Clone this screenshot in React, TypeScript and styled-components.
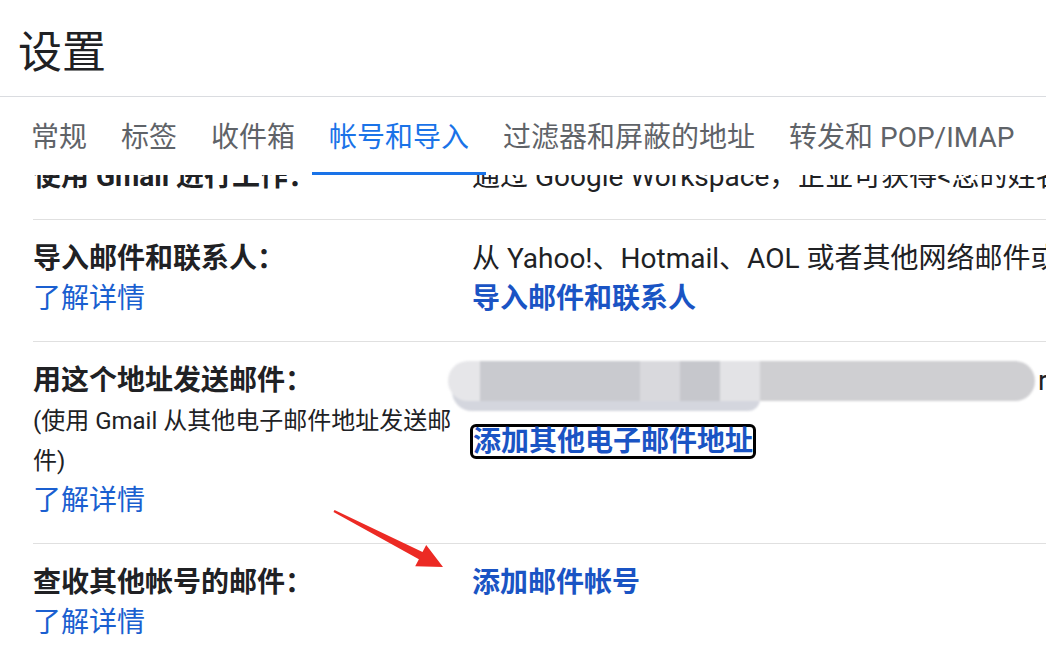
import React from "react";
import styled, { createGlobalStyle } from "styled-components";

const GlobalStyle = createGlobalStyle`
  html, body {
    margin: 0;
    padding: 0;
    background: #fff;
    overflow: hidden;
  }
  body {
    font-family: Roboto, "Noto Sans CJK SC", sans-serif;
    color: #202124;
  }
`;

const Page = styled.div`
  position: relative;
  width: 1046px;
  height: 658px;
  overflow: hidden;
  display: flex;
  flex-direction: column;
  background: #fff;
`;

const Header = styled.header`
  height: 97px;
  box-sizing: border-box;
  flex-shrink: 0;
  display: flex;
  align-items: center;
  padding: 2px 0 0 18px;
  border-bottom: 1px solid #dadce0;
`;

const Title = styled.h1`
  margin: 0;
  font-family: "Noto Sans CJK SC", sans-serif;
  font-size: 44px;
  font-weight: 400;
  line-height: 1;
  color: #202124;
`;

const TabBar = styled.nav`
  position: relative;
  z-index: 1;
  flex-shrink: 0;
  height: 78px;
  display: flex;
  padding-left: 14px;
  background: #fff;
`;

const Tab = styled.div<{ $active?: boolean }>`
  display: flex;
  align-items: center;
  box-sizing: border-box;
  padding: 0 17px;
  font-size: 28px;
  white-space: nowrap;
  color: ${(p) => (p.$active ? "#1a73e8" : "#5f6368")};
  border-bottom: 3px solid ${(p) => (p.$active ? "#1a73e8" : "transparent")};
`;

const Viewport = styled.div`
  flex: 1;
  overflow: hidden;
`;

const List = styled.div`
  margin-top: -37px;
`;

const Row = styled.section`
  margin-left: 33px;
  display: grid;
  grid-template-columns: 439px minmax(0, 1fr);
  padding: 19px 0 22px;
  border-bottom: 1px solid #e0e0e0;
`;

const LeftCol = styled.div`
  display: flex;
  flex-direction: column;
`;

const RightCol = styled.div`
  display: flex;
  flex-direction: column;
  align-items: flex-start;
  min-width: 0;
`;

const Label = styled.div`
  font-size: 28px;
  font-weight: 700;
  line-height: 40px;
  color: #202124;
`;

const Desc = styled.div`
  font-size: 24px;
  line-height: 40px;
  color: #202124;
`;

const LearnMore = styled.a`
  font-size: 28px;
  line-height: 40px;
  color: #1a5fd0;
  text-decoration: none;
`;

const Text = styled.div`
  font-size: 28px;
  line-height: 40px;
  white-space: nowrap;
  color: #202124;
`;

const Action = styled.a<{ $focused?: boolean }>`
  display: inline-block;
  font-size: 28px;
  font-weight: 700;
  white-space: nowrap;
  color: #1a54c4;
  text-decoration: none;
  line-height: ${(p) => (p.$focused ? "29px" : "40px")};
  ${(p) =>
    p.$focused &&
    `
    margin: 11px 0 0 -2px;
    border: 3px solid #000;
    border-radius: 6px;
    background: #fff;
  `}
`;

const MosaicLine = styled.div`
  display: flex;
  align-items: flex-start;
  margin-left: -24px;
  height: 52px;
  white-space: nowrap;
`;

const Mosaic = styled.div`
  position: relative;
  display: flex;
  height: 40px;
  filter: blur(1.2px);
`;

const Block = styled.div<{ $w: number; $c: string }>`
  position: relative;
  z-index: 1;
  width: ${(p) => p.$w}px;
  height: 100%;
  background: ${(p) => p.$c};
  &:first-child {
    border-radius: 20px 0 0 20px;
  }
  &:last-of-type {
    border-radius: 0 20px 20px 0;
  }
`;

const Smudge = styled.span`
  position: absolute;
  left: 4px;
  top: 30px;
  width: 308px;
  height: 20px;
  border-radius: 0 0 30px 50px;
  background: #d4d6de;
`;

const Tail = styled.span`
  margin-left: 3px;
  font-size: 28px;
  line-height: 40px;
  color: #202124;
`;

const Arrow = styled.svg`
  position: absolute;
  left: 320px;
  top: 495px;
  z-index: 2;
`;

const tabs = ["常规", "标签", "收件箱", "帐号和导入", "过滤器和屏蔽的地址", "转发和 POP/IMAP"];

const mosaic = [
  { w: 32, c: "#e6e6e9" },
  { w: 160, c: "#c9cacf" },
  { w: 40, c: "#d9d9dd" },
  { w: 40, c: "#c6c7cc" },
  { w: 40, c: "#e3e3e6" },
  { w: 275, c: "#cfcfd2" },
];

export default function App() {
  return (
    <>
      <GlobalStyle />
      <Page>
        <Header>
          <Title>设置</Title>
        </Header>
        <TabBar>
          {tabs.map((t) => (
            <Tab key={t} $active={t === "帐号和导入"}>
              {t}
            </Tab>
          ))}
        </TabBar>
        <Viewport>
          <List>
            <Row>
              <LeftCol>
                <Label>使用 Gmail 进行工作：</Label>
              </LeftCol>
              <RightCol>
                <Text>通过 Google Workspace，企业可获得&lt;您的姓名&gt;@&lt;您的公司&gt;.com</Text>
              </RightCol>
            </Row>
            <Row>
              <LeftCol>
                <Label>导入邮件和联系人：</Label>
                <LearnMore>了解详情</LearnMore>
              </LeftCol>
              <RightCol>
                <Text>从 Yahoo!、Hotmail、AOL 或者其他网络邮件或 POP3 帐号中导入。</Text>
                <Action>导入邮件和联系人</Action>
              </RightCol>
            </Row>
            <Row>
              <LeftCol>
                <Label>用这个地址发送邮件：</Label>
                <Desc>(使用 Gmail 从其他电子邮件地址发送邮件)</Desc>
                <LearnMore>了解详情</LearnMore>
              </LeftCol>
              <RightCol>
                <MosaicLine>
                  <Mosaic>
                    {mosaic.map((b, i) => (
                      <Block key={i} $w={b.w} $c={b.c} />
                    ))}
                    <Smudge />
                  </Mosaic>
                  <Tail>r</Tail>
                </MosaicLine>
                <Action $focused>添加其他电子邮件地址</Action>
              </RightCol>
            </Row>
            <Row>
              <LeftCol>
                <Label>查收其他帐号的邮件：</Label>
                <LearnMore>了解详情</LearnMore>
              </LeftCol>
              <RightCol>
                <Action>添加邮件帐号</Action>
              </RightCol>
            </Row>
          </List>
        </Viewport>
        <Arrow width="140" height="90" viewBox="0 0 140 90">
          <polygon
            points="14.5,15.1 102.5,57 106.2,49.9 123,72 95.2,71.3 98.9,64.2 13.5,16.9"
            fill="#ec2a24"
          />
        </Arrow>
      </Page>
    </>
  );
}
